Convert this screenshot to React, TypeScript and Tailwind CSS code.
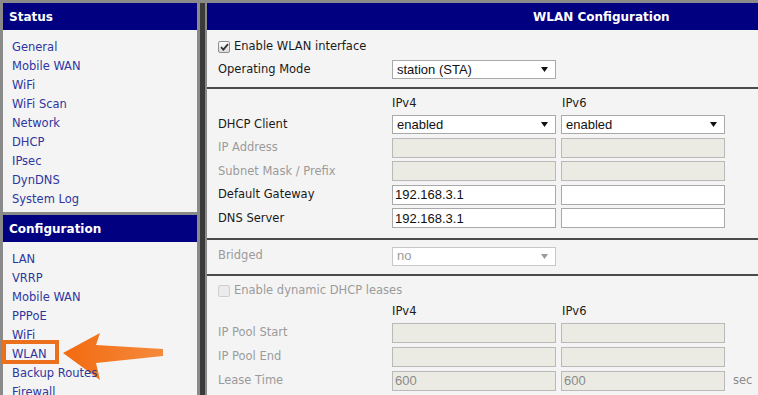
const font = { fontFamily: '"DejaVu Sans", Verdana, sans-serif' };

const statusLinks = ["General", "Mobile WAN", "WiFi", "WiFi Scan", "Network", "DHCP", "IPsec", "DynDNS", "System Log"];
const configLinks = ["LAN", "VRRP", "Mobile WAN", "PPPoE", "WiFi", "WLAN", "Backup Routes", "Firewall"];

function Arrow({ color }: { color: string }) {
  return (
    <svg width="7" height="5" viewBox="0 0 7 5" className="shrink-0">
      <path d="M0 0H7L3.5 5Z" fill={color} />
    </svg>
  );
}

function Select({ value, disabled }: { value: string; disabled?: boolean }) {
  return (
    <div
      className={`flex h-[19px] w-[164px] items-center justify-between border pl-[4px] pr-[7px] font-['Liberation_Sans',Arial,sans-serif] text-[13px] ${
        disabled ? "border-[#c8c8c8] bg-white text-[#9a9a9a]" : "border-[#a9a9a9] bg-white text-[#111]"
      }`}
    >
      <span>{value}</span>
      <Arrow color={disabled ? "#9a9a9a" : "#111"} />
    </div>
  );
}

function Input({ value = "", disabled }: { value?: string; disabled?: boolean }) {
  return (
    <div
      className={`flex h-[20px] w-[164px] items-center border pl-[2px] font-['Liberation_Sans',Arial,sans-serif] text-[13px] ${
        disabled ? "border-[#b9b9b9] bg-[#ebebe4] text-[#8a8a8a]" : "border-[#a9a9a9] bg-white text-[#111]"
      }`}
    >
      {value}
    </div>
  );
}

function Check({ checked, disabled }: { checked?: boolean; disabled?: boolean }) {
  return (
    <span
      className={`flex h-[12px] w-[12px] items-center justify-center rounded-[2px] border ${
        disabled ? "border-[#cfcfcf] bg-[#ececec]" : "border-[#8e8e8e] bg-gradient-to-b from-[#fdfdfd] to-[#dcdcdc]"
      }`}
    >
      {checked && (
        <svg width="9" height="8" viewBox="0 0 9 8">
          <path d="M1 4.2L3.4 6.6L8 1.2" fill="none" stroke="#333" strokeWidth="1.8" />
        </svg>
      )}
    </span>
  );
}

function Row({ label, dim, children, h = "h-[23.5px]" }: { label: string; dim?: boolean; children?: React.ReactNode; h?: string }) {
  return (
    <div className={`flex ${h} items-center`}>
      <div className={`w-[174px] ${dim ? "text-[#9b9b9b]" : "text-[#1a1a1a]"}`}>{label}</div>
      <div className="flex items-center gap-[5px]">{children}</div>
    </div>
  );
}

function ColHeads({ h }: { h: string }) {
  return (
    <div className={`flex ${h} items-center text-[#1a1a1a]`}>
      <div className="w-[174px]" />
      <div className="w-[170px]">IPv4</div>
      <div>IPv6</div>
    </div>
  );
}

function SideBox({ title, links, className = "" }: { title: string; links: string[]; className?: string }) {
  return (
    <div className={`bg-[#f4f4f4] ${className}`}>
      <div className="flex h-[27px] items-center bg-[#000080] pl-[6px] text-[12px] font-bold text-white">{title}</div>
      <div className="pt-[8.5px] pb-[2.5px]">
        {links.map((l, i) => (
          <div key={i} className="relative z-10 flex h-[19px] items-center pl-[9px] text-[#2f36a0]">
            <span>{l}</span>
          </div>
        ))}
      </div>
    </div>
  );
}

export default function App() {
  return (
    <div style={font} className="relative flex h-[395px] w-[758px] overflow-hidden bg-[#8a8a8a] pl-[3px] pt-[3px] text-[11.5px]">
      <div className="flex w-[194px] shrink-0 flex-col gap-[3px]">
        <SideBox title="Status" links={statusLinks} />
        <SideBox title="Configuration" links={configLinks} className="flex-1" />
      </div>

      <div className="flex w-[10px] shrink-0 justify-center">
        <div className="w-[5px] bg-[#3a3a3a]" />
      </div>

      <div className="flex w-[560px] shrink-0 flex-col bg-[#f4f4f4]">
        <div className="flex h-[27px] items-center bg-[#000080] pl-[326px] text-[12px] font-bold text-white">WLAN Configuration</div>

        <div className="pl-[11px] pt-[5px] pb-[5px]">
          <div className="flex h-[23px] items-center gap-[4px] text-[#1a1a1a]">
            <Check checked />
            <span>Enable WLAN interface</span>
          </div>
          <Row label="Operating Mode">
            <Select value="station (STA)" />
          </Row>
        </div>

        <div className="border-t-2 border-[#4a4a4a] pl-[11px] pt-[6px] pb-[8px]">
          <ColHeads h="h-[18px]" />
          <Row label="DHCP Client">
            <Select value="enabled" />
            <Select value="enabled" />
          </Row>
          <Row label="IP Address" dim>
            <Input disabled />
            <Input disabled />
          </Row>
          <Row label="Subnet Mask / Prefix" dim>
            <Input disabled />
            <Input disabled />
          </Row>
          <Row label="Default Gateway">
            <Input value="192.168.3.1" />
            <Input />
          </Row>
          <Row label="DNS Server">
            <Input value="192.168.3.1" />
            <Input />
          </Row>
        </div>

        <div className="border-t-2 border-[#4a4a4a] pl-[11px] pt-[4px] pb-[6px]">
          <Row label="Bridged" dim h="h-[24px]">
            <Select value="no" disabled />
          </Row>
        </div>

        <div className="border-t-2 border-[#4a4a4a] pl-[11px] pt-[3px]">
          <div className="flex h-[24px] items-center gap-[4px] text-[#9b9b9b]">
            <Check disabled />
            <span>Enable dynamic DHCP leases</span>
          </div>
          <ColHeads h="h-[18px]" />
          <Row label="IP Pool Start" dim h="h-[24px]">
            <Input disabled />
            <Input disabled />
          </Row>
          <Row label="IP Pool End" dim h="h-[24px]">
            <Input disabled />
            <Input disabled />
          </Row>
          <Row label="Lease Time" dim h="h-[24px]">
            <Input value="600" disabled />
            <Input value="600" disabled />
            <span className="ml-[3px] text-[#8a8a8a]">sec</span>
          </Row>
        </div>
      </div>

      {/* highlight overlay */}
      <div className="absolute left-[2px] top-[340px] z-20 h-[24px] w-[57px] border-[4px] border-[#ec6f1b]" />
      <svg className="absolute left-0 top-0 z-[5]" width="200" height="395" viewBox="0 0 200 395">
        <defs>
          <linearGradient id="ar" x1="0" y1="0" x2="1" y2="0">
            <stop offset="0" stopColor="#f26a10" />
            <stop offset="1" stopColor="#f58a3c" />
          </linearGradient>
        </defs>
        <path d="M63 353L100 333L96 345L163 349L163 356L96 363L100 380Z" fill="url(#ar)" />
      </svg>
    </div>
  );
}
